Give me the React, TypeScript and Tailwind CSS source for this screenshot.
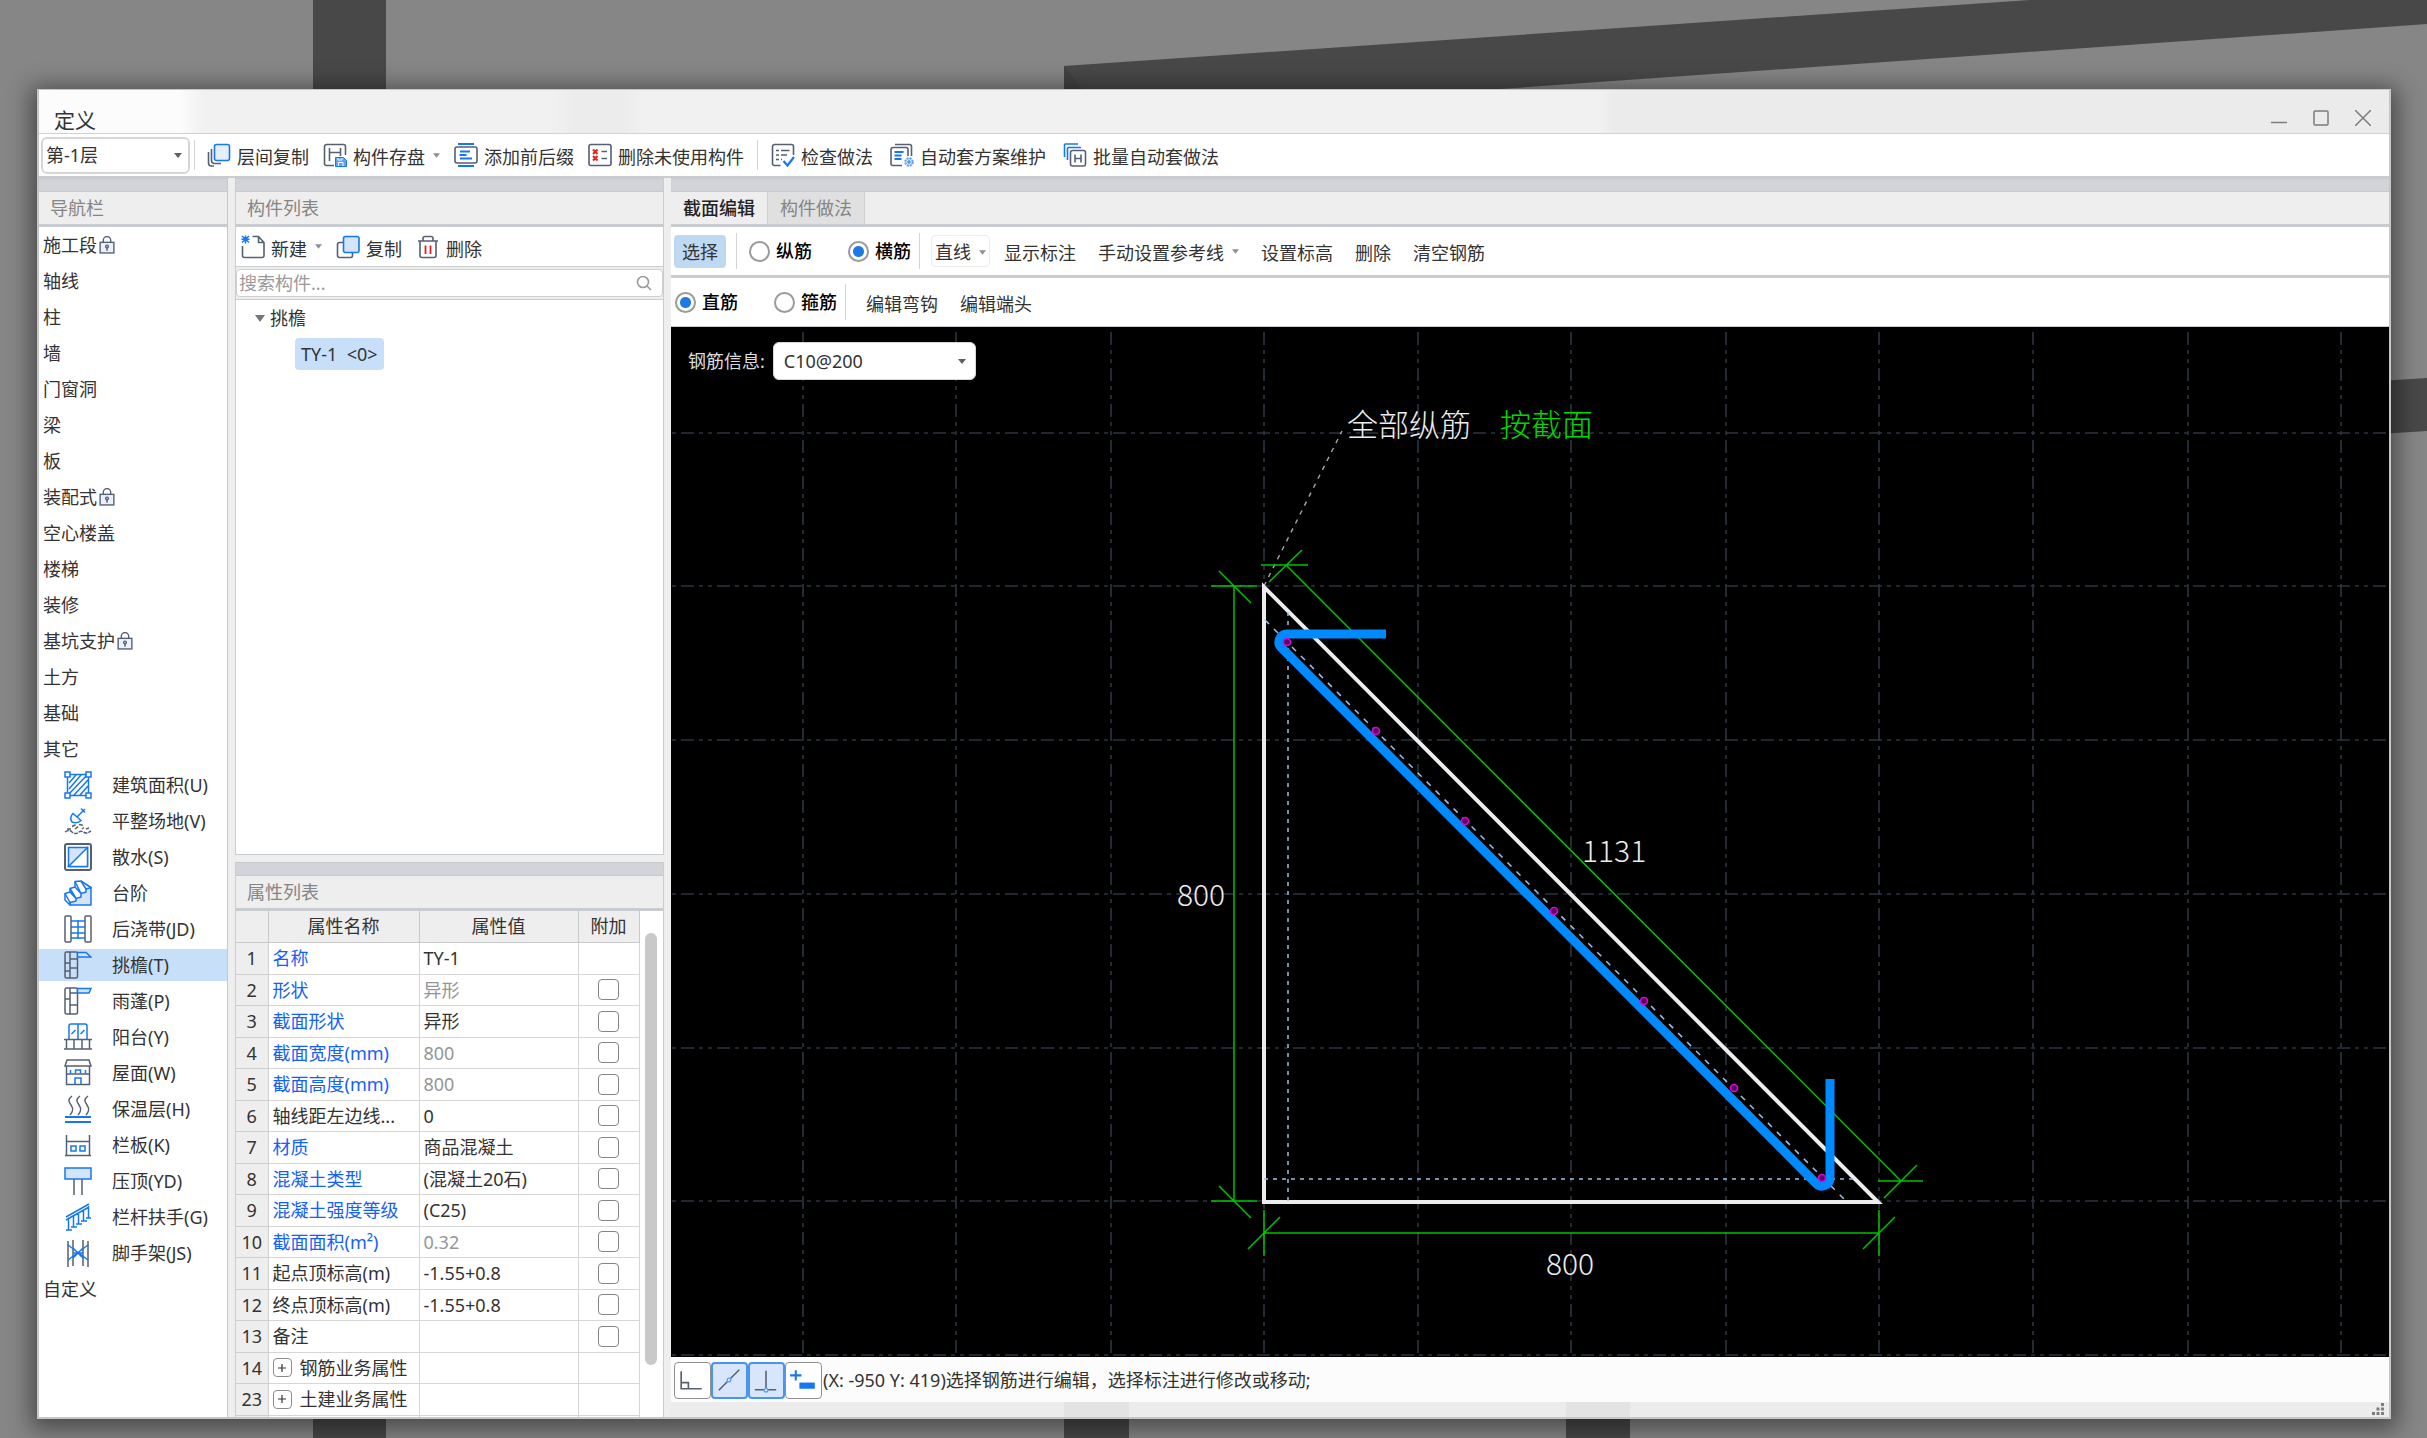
import React, { useState } from 'react';

// --- Types ---
interface NavEntry {
  label: string;
  locked?: boolean;
}

interface Property {
  no: number;
  name: string;
  value?: string;
  link?: boolean;
  muted?: boolean;
  checkable?: boolean;
  group?: boolean;
}

type IconProps = { className?: string };

// --- Data ---
const categories: NavEntry[] = [
  { label: '施工段', locked: true },
  { label: '轴线' },
  { label: '柱' },
  { label: '墙' },
  { label: '门窗洞' },
  { label: '梁' },
  { label: '板' },
  { label: '装配式', locked: true },
  { label: '空心楼盖' },
  { label: '楼梯' },
  { label: '装修' },
  { label: '基坑支护', locked: true },
  { label: '土方' },
  { label: '基础' },
  { label: '其它' },
];

const properties: Property[] = [
  { no: 1, name: '名称', value: 'TY-1', link: true },
  { no: 2, name: '形状', value: '异形', link: true, muted: true, checkable: true },
  { no: 3, name: '截面形状', value: '异形', link: true, checkable: true },
  { no: 4, name: '截面宽度(mm)', value: '800', link: true, muted: true, checkable: true },
  { no: 5, name: '截面高度(mm)', value: '800', link: true, muted: true, checkable: true },
  { no: 6, name: '轴线距左边线...', value: '0', checkable: true },
  { no: 7, name: '材质', value: '商品混凝土', link: true, checkable: true },
  { no: 8, name: '混凝土类型', value: '(混凝土20石)', link: true, checkable: true },
  { no: 9, name: '混凝土强度等级', value: '(C25)', link: true, checkable: true },
  { no: 10, name: '截面面积(m²)', value: '0.32', link: true, muted: true, checkable: true },
  { no: 11, name: '起点顶标高(m)', value: '-1.55+0.8', checkable: true },
  { no: 12, name: '终点顶标高(m)', value: '-1.55+0.8', checkable: true },
  { no: 13, name: '备注', checkable: true },
  { no: 14, name: '钢筋业务属性', group: true },
  { no: 23, name: '土建业务属性', group: true },
];

const gridX = [132, 285, 440, 593, 747, 900, 1055, 1208, 1362, 1517, 1670];
const gridY = [106, 259, 413, 567, 721, 874, 1028];
const bars = [[616, 315], [705, 404], [794, 494], [883, 584], [973, 674], [1063, 761], [1151, 851]];

// --- SVG Icons ---
const INK = '#566073';
const BLUE = '#1677f2';
const PALE = '#d3e4fb';

const Icon: React.FC<{ className?: string; children: React.ReactNode }> = ({ className = 'size-6', children }) => (
  <svg className={`${className} shrink-0`} viewBox="0 0 24 24" fill="none" stroke={INK} strokeWidth={1.6} aria-hidden="true">
    {children}
  </svg>
);

const NavIcon: React.FC<{ children: React.ReactNode }> = ({ children }) => (
  <svg className="size-7 shrink-0" viewBox="0 0 28 28" fill="none" stroke={INK} strokeWidth={1.5} aria-hidden="true">
    {children}
  </svg>
);

const Caret: React.FC<IconProps> = ({ className = 'w-2 fill-[#5b616b]' }) => (
  <svg className={`${className} h-[5px] shrink-0`} viewBox="0 0 8 5" aria-hidden="true">
    <path d="M0 0h8L4 5z" />
  </svg>
);

const LayerCopyIcon = () => (
  <Icon>
    <path d="M1.500 9v11a3 3 0 0 0 3 3H7M4.500 6v11.500a3 3 0 0 0 3 3H14" />
    <rect x="7.500" y="1.500" width="15" height="16" rx="2" fill="#e6effd" stroke={BLUE} />
  </Icon>
);

const ArchiveIcon = () => (
  <Icon>
    <path d="M11 22.500H3.500a2 2 0 0 1-2-2v-17a2 2 0 0 1 2-2h17a2 2 0 0 1 2 2V12" />
    <path d="M6.500 5v13M6.500 9.500h11M17.500 5v8" />
    <path d="M12.500 14.500h8l3 3v6h-11z" fill="#5ea2f8" stroke={BLUE} strokeWidth={1} />
    <path d="M15.500 23v-3.500h4.500V23M15 15v2h4v-2" stroke="#fff" strokeWidth={1} />
  </Icon>
);

const AffixIcon = () => (
  <Icon>
    <rect x="1" y="4" width="22" height="16" rx="2" />
    <path d="M4 1h16M4 23h16M6 8.500h10M5.500 12h7M6 15.500h12" stroke={BLUE} strokeWidth={1.800} />
  </Icon>
);

const RemoveUnusedIcon = () => (
  <Icon>
    <rect x="1" y="1.500" width="22" height="21" rx="2" />
    <path d="M13.500 8.500H19M13.500 15.500H19" />
    <path d="M5 6.500l4.500 4.500M9.500 6.500L5 11M5 13l4.500 4.500M9.500 13L5 17.500" stroke="#e02222" strokeWidth={2} />
  </Icon>
);

const CheckMethodIcon = () => (
  <Icon>
    <path d="M9.500 22.500H3.500a2 2 0 0 1-2-2v-17a2 2 0 0 1 2-2h17a2 2 0 0 1 2 2V12" />
    <path d="M5 7.500h3M10 7.500h8.500M5 12h3M10 12h6M5 16.500h3M10 16.500h1" />
    <path d="M12.500 18l4 4.500L23 14" stroke={BLUE} strokeWidth={2.200} />
  </Icon>
);

const SchemeIcon = () => (
  <Icon>
    <path d="M12 22.500H3a2 2 0 0 1-2-2v-14a2 2 0 0 1 2-2h13a2 2 0 0 1 2 2V13" />
    <path d="M5 1.500h14.500a2 2 0 0 1 2 2V13" />
    <path d="M4.500 9h9M4.500 12.500h7M4.500 16h7" stroke={BLUE} strokeWidth={1.800} />
    <circle cx="19" cy="19" r="3.800" fill={PALE} stroke="#5ea2f8" strokeWidth={2} strokeDasharray="2 1" />
    <circle cx="19" cy="19" r="1.200" stroke={BLUE} strokeWidth={1} />
  </Icon>
);

const BatchIcon = () => (
  <Icon>
    <path d="M1.500 14V2a1 1 0 0 1 1-1H15M4.500 17V5.500a1 1 0 0 1 1-1H18" stroke={BLUE} />
    <rect x="7.500" y="7.500" width="15" height="15.500" rx="2" />
    <path d="M12 11.500v8M18 11.500v8M12 15.500h6" />
  </Icon>
);

const NewIcon = () => (
  <Icon>
    <path d="M11.500 1.500h6l5.500 6v13a2 2 0 0 1-2 2H3.500a2 2 0 0 1-2-2V11M17.500 1.500v6H23" />
    <path d="M1 1l7 6.500M8 1L1 7.500M4.500 .5v8M.5 4.200h8" stroke={BLUE} strokeWidth={1.500} />
  </Icon>
);

const CopyIcon = () => (
  <Icon>
    <path d="M7 7.500H3.500a2 2 0 0 0-2 2v11a2 2 0 0 0 2 2h11a2 2 0 0 0 2-2V18" />
    <rect x="7.500" y="1.500" width="15.500" height="16" rx="2" fill={PALE} stroke={BLUE} />
  </Icon>
);

const TrashIcon = () => (
  <Icon>
    <path d="M2 6h20M4 6v14.500a2 2 0 0 0 2 2h12a2 2 0 0 0 2-2V6M7 6V3.500a2 2 0 0 1 2-2h6a2 2 0 0 1 2 2V6" />
    <path d="M9.500 10.500v8.500M14.500 10.500v8.500" stroke="#e02222" strokeWidth={1.800} />
  </Icon>
);

const SearchIcon = () => (
  <svg className="size-4 shrink-0" viewBox="0 0 16 16" fill="none" stroke="#9a9a9a" strokeWidth={1.6} aria-hidden="true">
    <circle cx="7" cy="7" r="5.500" />
    <path d="M11 11l4 4" />
  </svg>
);

const LockIcon = () => (
  <svg className="ml-0.5 h-[18px] w-4 shrink-0" viewBox="0 0 15 17" fill="none" stroke={INK} strokeWidth={1.3} aria-hidden="true">
    <rect x="1" y="6" width="13" height="10" fill="#eaf1fd" />
    <path d="M4 6V4a3.500 3.500 0 0 1 7 0v2M7.500 11v3" />
    <circle cx="7.500" cy="10" r="1.300" />
  </svg>
);

const AreaIcon = () => (
  <NavIcon>
    <g stroke={BLUE}>
      <path d="M3.500 3.500h21v21h-21zM5 12l7-8M5 18L17 4M5 23L23 4M10 24l14-15M16 24l8-9" />
      <path d="M1 1h5v5H1zM22 1h5v5h-5zM1 22h5v5H1zM22 22h5v5h-5z" fill="#fff" />
    </g>
  </NavIcon>
);

const LevelingIcon = () => (
  <NavIcon>
    <path d="M21 2l-8 8M17 1.500l4 4M9 6.500l8 7c-2 2-6 2.500-9 1.500-2-3-1.500-6 1-8.500z" stroke={BLUE} />
    <path d="M1 25c3-2 5-2 7 0 2 2 5 2 7 0 3-2 5 1 7 1s3-1 5-2M3 22h4M8 19.500l4-2M11 22l4-3M15 17.500l5 1M18 22l2-1.500M22 22l3-1" strokeDasharray="4 1" />
  </NavIcon>
);

const ApronIcon = () => (
  <NavIcon>
    <rect x="1" y="1" width="26" height="26" rx="2" strokeWidth={2} />
    <path d="M4.500 4.500h19v19h-19z" fill={PALE} stroke={BLUE} />
    <path d="M23.500 4.500v19h-19z" fill="#fff" stroke={BLUE} />
  </NavIcon>
);

const StepsIcon = () => (
  <NavIcon>
    <g stroke={BLUE} strokeLinejoin="round">
      <path d="M6 26v-4.500l5-1.500v-3.500l6-2V11l5-1.500 5-1V26z" fill={PALE} />
      <path d="M1 14.500L6 13V9.500L11 8V2.500L17 2l10 6.500-5 1.500v3l-5 1.500V18l-5 1.500V22l-6 1.500V26l-5-5z" fill="#fff" />
      <path d="M1 14.500l5 9M6 13l6 6.500M6 9.500l6 10M11 8l6 6.500M11 2.500l6 12M17 2l5 8" />
    </g>
  </NavIcon>
);

const PostCastIcon = () => (
  <NavIcon>
    <path d="M7 6h14M7 12h14M7 18h14M7 23h14M14 5v19" stroke={BLUE} />
    <rect x="1" y="1" width="6" height="26" rx="1" fill="#fff" />
    <rect x="21" y="1" width="6" height="26" rx="1" fill="#fff" />
  </NavIcon>
);

const EavesIcon = () => (
  <NavIcon>
    <rect x="1" y="1" width="12.500" height="26" rx="1.500" />
    <path d="M6 1v26M1 12h5M1 20h5M6 8h7M6 17h7" />
    <path d="M13.500 1.500H22l5 4.500H13.500z" fill={PALE} stroke={BLUE} />
  </NavIcon>
);

const CanopyIcon = () => (
  <NavIcon>
    <rect x="1" y="1" width="12.500" height="26" rx="1.500" />
    <path d="M6 1v26M1 12h5M6 6h7M6 18h7" />
    <path d="M13.500 1.500H27L25 6H13.500z" fill={PALE} stroke={BLUE} />
  </NavIcon>
);

const BalconyIcon = () => (
  <NavIcon>
    <path d="M5 16V3a2 2 0 0 1 2-2h14a2 2 0 0 1 2 2v13M14 1v15M7.500 11l4-4M16.500 11l4-4" stroke={BLUE} />
    <path d="M0 16.500h28M2.500 16.500V26M10 16.500V26M18 16.500V26M25.500 16.500V26M0 26h28" />
  </NavIcon>
);

const RoofIcon = () => (
  <NavIcon>
    <path d="M3 1h22l2 6H1zM2.500 7v18.500h23V7M2.500 15h23" />
    <path d="M6.500 14.500v-3.500M21.500 14.500v-3.500M11.500 14.500V11h5v3.500M11 25v-6h6v6" stroke={BLUE} />
  </NavIcon>
);

const InsulationIcon = () => (
  <NavIcon>
    <path d="M8 1c-4 3-4 5-1 9s1 8-1 10M16 1c-4 3-4 5-1 9s1 8-1 10M24 1c-4 3-4 5-1 9s1 8-1 10" />
    <path d="M1 22h26M1 27h26" stroke={BLUE} strokeWidth={1.800} />
  </NavIcon>
);

const RailBoardIcon = () => (
  <NavIcon>
    <path d="M2.500 4v20M25.500 4v20M1 24.500h26M2.500 10.500h23" />
    <path d="M7 15h5v5H7zM16 15h5v5h-5z" stroke={BLUE} />
  </NavIcon>
);

const CopingIcon = () => (
  <NavIcon>
    <path d="M10 12v16M18 12v16" />
    <rect x="1" y="1" width="26" height="11" fill={PALE} stroke={BLUE} />
  </NavIcon>
);

const HandrailIcon = () => (
  <NavIcon>
    <path d="M2 14L25 1M2 17L25 4M4.500 15v12M9.500 12v12M14.500 9.500V21M19.500 6.500V18M24.500 3v12M2 27h6M7 24h6M12 21h6M17 18h6M22 15h5" stroke={BLUE} />
  </NavIcon>
);

const ScaffoldIcon = () => (
  <NavIcon>
    <path d="M4 2v26M9 1v26M19 1v26M24 2v26" />
    <path d="M4 6l20 15M24 6L4 21M9 14h10M9 9l10 10M19 9L9 19" stroke={BLUE} />
  </NavIcon>
);

const others: { label: string; icon: React.FC }[] = [
  { label: '建筑面积(U)', icon: AreaIcon },
  { label: '平整场地(V)', icon: LevelingIcon },
  { label: '散水(S)', icon: ApronIcon },
  { label: '台阶', icon: StepsIcon },
  { label: '后浇带(JD)', icon: PostCastIcon },
  { label: '挑檐(T)', icon: EavesIcon },
  { label: '雨蓬(P)', icon: CanopyIcon },
  { label: '阳台(Y)', icon: BalconyIcon },
  { label: '屋面(W)', icon: RoofIcon },
  { label: '保温层(H)', icon: InsulationIcon },
  { label: '栏板(K)', icon: RailBoardIcon },
  { label: '压顶(YD)', icon: CopingIcon },
  { label: '栏杆扶手(G)', icon: HandrailIcon },
  { label: '脚手架(JS)', icon: ScaffoldIcon },
];

// --- Small UI pieces ---
const ToolButton: React.FC<{ icon?: React.ReactNode; label: string; caret?: boolean }> = ({ icon, label, caret }) => (
  <button type="button" className="flex items-center gap-1.5 whitespace-nowrap">
    {icon}
    <span className="pt-1">{label}</span>
    {caret && <Caret className="ml-0.5 w-[7px] fill-[#8c8f94]" />}
  </button>
);

const Divider = () => <div className="h-9 w-px shrink-0 bg-[#d4d4d4]" />;

const DockHeader: React.FC<{ title: string }> = ({ title }) => (
  <>
    <div className="h-[14px] shrink-0 border-y border-[#c6cacf] bg-[#d2d4da]" />
    <h2 className="flex h-[35px] shrink-0 items-center border-b-3 border-[#c8ccd0] bg-[#eeeeee] px-[11px] text-[#858585]">{title}</h2>
  </>
);

interface RadioProps {
  name: string;
  label: string;
  checked: boolean;
  onChange: () => void;
}
const Radio: React.FC<RadioProps> = ({ name, label, checked, onChange }) => (
  <label className="flex items-center gap-1.5 whitespace-nowrap font-medium text-black">
    <input
      type="radio"
      name={name}
      checked={checked}
      onChange={onChange}
      className="size-[21px] appearance-none rounded-full border-2 border-[#9a9a9a] bg-white checked:bg-[radial-gradient(circle,#1f7ae8_0_5px,#ffffff_6px)]"
    />
    {label}
  </label>
);

// --- Panels ---
const Backdrop = () => (
  <svg className="absolute inset-0 size-full" viewBox="0 0 2427 1438" preserveAspectRatio="none" aria-hidden="true">
    <g fill="#484848">
      <path d="M313 0h73v1438h-73zM1064 66L2030 0h397v24L1500 89v20h-436zM2300 386l127-8v53l-127 8zM1064 1300h65v138h-65zM1566 1300h64v138h-64z" />
    </g>
    <path d="M1064 66l24 30h-24z" fill="#424242" />
  </svg>
);

const TitleBar = () => (
  <header className="flex h-11 shrink-0 items-end justify-between border-b border-[#cfd1d3] bg-[linear-gradient(90deg,#fcfcfc_140px,#f1f1f1_165px,#f1f1f1_515px,#ececec_535px,#ececec_585px,#f1f1f1_605px,#f1f1f1_1560px,#ebebeb_1575px)] pr-[18px] pl-[15px] text-[#7c7c7c]">
    <h1 className="text-[21px] leading-[26px] text-[#333]">定义</h1>
    <div className="flex gap-[26px] pb-[7px]">
      <button type="button" aria-label="最小化">
        <svg className="size-4" viewBox="0 0 16 16" stroke="currentColor" strokeWidth={1.5}><path d="M0 12.500h16" /></svg>
      </button>
      <button type="button" aria-label="最大化">
        <svg className="size-4" viewBox="0 0 16 16" fill="none" stroke="currentColor" strokeWidth={1.5}><rect x="1" y="1" width="14" height="14" rx="1" /></svg>
      </button>
      <button type="button" aria-label="关闭">
        <svg className="size-4" viewBox="0 0 16 16" stroke="currentColor" strokeWidth={1.5}><path d="M0 0l16 16M16 0L0 16" /></svg>
      </button>
    </div>
  </header>
);

const MainToolbar = () => (
  <div className="flex h-11 shrink-0 items-center border-b-2 border-[#c9cdd2] bg-white pl-0.5">
    <div className="relative mr-1 flex items-center">
      <select aria-label="楼层" className="h-[37px] w-[149px] appearance-none rounded-md border-2 border-[#d6d6d6] bg-white pl-[3px]">
        <option>第-1层</option>
      </select>
      <Caret className="pointer-events-none absolute right-2 w-2 fill-[#5b616b]" />
    </div>
    <div className="h-[30px] w-px bg-[#d4d4d4]" />
    <div className="ml-3 flex gap-[14px]">
      <ToolButton icon={<LayerCopyIcon />} label="层间复制" />
      <ToolButton icon={<ArchiveIcon />} label="构件存盘" caret />
      <ToolButton icon={<AffixIcon />} label="添加前后缀" />
      <ToolButton icon={<RemoveUnusedIcon />} label="删除未使用构件" />
    </div>
    <div className="mx-[13px] h-[30px] w-px bg-[#d4d4d4]" />
    <div className="flex gap-[17px]">
      <ToolButton icon={<CheckMethodIcon />} label="检查做法" />
      <ToolButton icon={<SchemeIcon />} label="自动套方案维护" />
      <ToolButton icon={<BatchIcon />} label="批量自动套做法" />
    </div>
  </div>
);

const Navigator = () => {
  const [active, setActive] = useState('挑檐(T)');
  return (
    <nav className="flex w-[189px] shrink-0 flex-col overflow-hidden border-r border-[#c8c8c8] bg-white">
      <DockHeader title="导航栏" />
      <ul>
        {categories.map(item => (
          <li key={item.label}>
            <button type="button" className="flex h-9 w-full items-center pl-1">
              {item.label}
              {item.locked && <LockIcon />}
            </button>
          </li>
        ))}
        {others.map(({ label, icon: Glyph }) => (
          <li key={label} className="flex h-9 items-center">
            <button
              type="button"
              onClick={() => setActive(label)}
              className={`flex h-8 w-full items-center gap-5 pl-[25px] whitespace-nowrap ${active === label ? 'bg-[#c7dff9]' : ''}`}
            >
              <Glyph />
              {label}
            </button>
          </li>
        ))}
        <li>
          <button type="button" className="flex h-9 w-full items-center pl-1">自定义</button>
        </li>
      </ul>
    </nav>
  );
};

const ComponentList = () => (
  <section className="flex min-h-0 flex-col border border-t-0 border-[#c9cdd0]">
    <DockHeader title="构件列表" />
    <div className="flex h-10 shrink-0 items-center gap-[14px] border-b border-[#c9cdd0] bg-white px-[5px]">
      <ToolButton icon={<NewIcon />} label="新建" caret />
      <ToolButton icon={<CopyIcon />} label="复制" />
      <ToolButton icon={<TrashIcon />} label="删除" />
    </div>
    <div className="my-0.5 flex h-7 shrink-0 items-center rounded border border-[#cfcfcf] bg-white pr-2.5 pl-0.5">
      <input type="text" aria-label="搜索构件" placeholder="搜索构件..." className="min-w-0 flex-1 outline-none placeholder:text-[#9a9a9a]" />
      <SearchIcon />
    </div>
    <div className="flex-1 border-t border-[#cfcfcf] bg-white">
      <div className="flex h-9 items-center gap-1 pl-[18px]">
        <svg className="h-[7px] w-3" viewBox="0 0 12 7" fill="#767676" aria-hidden="true"><path d="M1 0h10L6 7z" /></svg>
        挑檐
      </div>
      <div className="flex h-9 items-center pl-[59px]">
        <button type="button" className="h-8 rounded bg-[#c7dff9] px-1.5 whitespace-pre">{'TY-1  <0>'}</button>
      </div>
    </div>
  </section>
);

const PropertyTable = () => (
  <section className="flex min-h-0 flex-col border-x border-[#c9cdd0]">
    <DockHeader title="属性列表" />
    <div className="flex min-h-0 flex-1 overflow-hidden bg-white">
      <table className="w-[403px] shrink-0 table-fixed border-collapse self-start">
        <colgroup>
          <col className="w-8" />
          <col className="w-[151px]" />
          <col className="w-[159px]" />
          <col className="w-[61px]" />
        </colgroup>
        <thead>
          <tr className="h-[31px] bg-[#eeeeee]">
            <th className="border-r border-b border-[#c9c9c9]" />
            <th className="border-r border-b border-[#c9c9c9] font-normal">属性名称</th>
            <th className="border-r border-b border-[#c9c9c9] font-normal">属性值</th>
            <th className="border-r border-b border-[#c9c9c9] font-normal">附加</th>
          </tr>
        </thead>
        <tbody>
          {properties.map(p => (
            <tr key={p.no} className="odd:h-8 even:h-[31px]">
              <td className="border-r border-b border-[#cfcfcf] bg-[#eeeeee] p-0 text-center">{p.no}</td>
              <td className={`border-r border-b border-[#d6d6d6] p-0 pl-1 whitespace-nowrap ${p.link ? 'text-[#1460fa]' : ''}`}>
                {p.group ? (
                  <div className="flex items-center gap-2">
                    <button type="button" aria-label="展开" className="flex size-[19px] items-center justify-center rounded border border-[#8c8c8c]">
                      <svg className="size-2" viewBox="0 0 8 8" stroke="#333" strokeWidth={1.2}><path d="M4 0v8M0 4h8" /></svg>
                    </button>
                    {p.name}
                  </div>
                ) : (
                  p.name
                )}
              </td>
              <td className={`border-r border-b border-[#d6d6d6] p-0 pl-1 ${p.muted ? 'text-[#959595]' : ''}`}>{p.value}</td>
              <td className="border-r border-b border-[#d6d6d6] p-0">
                {p.checkable && (
                  <input type="checkbox" aria-label={`${p.name} 附加`} className="mx-auto block size-[21px] appearance-none rounded border border-[#858585] checked:bg-[#1f7ae8]" />
                )}
              </td>
            </tr>
          ))}
          <tr className="h-8">
            <td className="border-r border-[#cfcfcf] bg-[#eeeeee]" />
            <td className="border-r border-[#d6d6d6]" />
            <td className="border-r border-[#d6d6d6]" />
            <td className="border-r border-[#d6d6d6]" />
          </tr>
        </tbody>
      </table>
      <div className="flex flex-1 justify-center pt-[22px] pb-[52px]">
        <div className="w-3 rounded-full bg-[#c9c9c9]" />
      </div>
    </div>
  </section>
);

const EditorToolbars = () => {
  const [direction, setDirection] = useState('横筋');
  const [kind, setKind] = useState('直筋');
  return (
    <>
      <div className="flex h-[51px] shrink-0 items-center border-b-3 border-[#c8ccd0] bg-white pl-[3px]">
        <button type="button" className="mr-2.5 h-[33px] rounded bg-[#c0d9f3] px-2 pt-0.5">选择</button>
        <Divider />
        <div className="mr-2 ml-3 flex gap-9">
          <Radio name="direction" label="纵筋" checked={direction === '纵筋'} onChange={() => setDirection('纵筋')} />
          <Radio name="direction" label="横筋" checked={direction === '横筋'} onChange={() => setDirection('横筋')} />
        </div>
        <Divider />
        <div className="ml-[11px] flex items-center gap-[14px]">
          <button type="button" className="flex h-8 items-center gap-2 rounded border border-[#ececec] px-[3px] pt-0.5">
            直线
            <Caret className="w-[7px] fill-[#8c8f94]" />
          </button>
          <div className="flex items-center gap-[22px]">
            <ToolButton label="显示标注" />
            <ToolButton label="手动设置参考线" caret />
            <ToolButton label="设置标高" />
            <ToolButton label="删除" />
            <ToolButton label="清空钢筋" />
          </div>
        </div>
      </div>
      <div className="flex h-[49px] shrink-0 items-center border-b border-[#c8ccd0] bg-white pl-1">
        <div className="mr-2 flex gap-9">
          <Radio name="kind" label="直筋" checked={kind === '直筋'} onChange={() => setKind('直筋')} />
          <Radio name="kind" label="箍筋" checked={kind === '箍筋'} onChange={() => setKind('箍筋')} />
        </div>
        <Divider />
        <div className="ml-5 flex gap-[22px]">
          <ToolButton label="编辑弯钩" />
          <ToolButton label="编辑端头" />
        </div>
      </div>
    </>
  );
};

const SectionCanvas = () => (
  <div className="relative min-h-0 flex-1 bg-black">
    <svg className="absolute inset-0 size-full" viewBox="0 0 1718 1030" preserveAspectRatio="xMidYMid slice" fill="none">
      {/* grid */}
      <g stroke="#2c3540" strokeWidth={1.6} strokeDasharray="13 5 4 5 4 5">
        {gridX.map(x => <path key={x} d={`M${x} 5V1030`} />)}
        {gridY.map(y => <path key={y} d={`M-26 ${y}H1718`} />)}
      </g>

      {/* leader */}
      <path d="M593 259L671 104" stroke="#a8a8a8" strokeWidth={1.4} strokeDasharray="4.500 5.500" />

      {/* dimensions */}
      <g stroke="#00c400" strokeWidth={1.5}>
        <path d="M563 259V874M540 259h46M540 874h46M548 244l32 32M548 859l32 32" />
        <path d="M593 906H1208M593 883v46M1208 883v46M577 922l32-32M1192 922l32-32" />
        <path d="M616 239L1230 854M590 238h47M1207 854h45M598 255l33-32M1213 871l33-33" />
      </g>

      {/* concrete outline */}
      <path d="M593 260V875H1207z" stroke="#ededed" strokeWidth={4} />

      {/* cover lines */}
      <g stroke="#9fbfe6" strokeWidth={1.5}>
        <path d="M617 285V874M593 852H1185" strokeDasharray="4 5" />
        <path d="M594 293L1176 875" strokeDasharray="5.700 7" />
      </g>

      {/* bar with hooks */}
      <path d="M715 307H616A8 8 0 0 0 610.400 320.700L1145.400 856.700A8 8 0 0 0 1159 851V752" stroke="#008aff" strokeWidth={9} />

      <g fill="#5a005a" stroke="#e000e0" strokeWidth={1.600}>
        {bars.map(([x, y]) => <circle key={x} cx={x} cy={y} r={3.500} />)}
      </g>

      <g fill="#ececec" className="font-['Noto_Sans_CJK_SC',sans-serif] text-[30px] font-light">
        <text x="506" y="579">800</text>
        <text x="875" y="948">800</text>
        <text x="911" y="535">1131</text>
      </g>
      <g className="font-['Noto_Sans_CJK_SC',sans-serif] text-[31px] font-light">
        <text x="676" y="109" fill="#ececec">全部纵筋</text>
        <text x="829" y="109" fill="#00d800">按截面</text>
      </g>
    </svg>
    <div className="absolute top-[15px] left-[17px] flex items-center gap-2">
      <label htmlFor="rebar" className="text-[#dcdcdc]">钢筋信息:</label>
      <div className="relative flex items-center">
        <select id="rebar" className="h-[38px] w-[203px] appearance-none rounded-md border border-[#d6d6d6] bg-white pl-2.5">
          <option>C10@200</option>
        </select>
        <Caret className="pointer-events-none absolute right-2.5 w-2 fill-[#5b616b]" />
      </div>
    </div>
  </div>
);

const StatusBar = () => (
  <footer className="shrink-0">
    <div className="flex h-[45px] items-center bg-[#fcfcfc] pt-px pl-[3px]">
      <button type="button" aria-label="正交" className="size-[37px] rounded border border-[#909090] bg-white">
        <svg viewBox="0 0 34 34" fill="none" stroke={INK} strokeWidth={1.600}><path d="M6 8v17h20M6 19h7v6" /></svg>
      </button>
      <button type="button" aria-label="中点" className="size-[37px] rounded border-2 border-[#4b94ee] bg-[#d7e6fb]">
        <svg viewBox="0 0 34 34" fill="none" stroke={INK} strokeWidth={1.600}><path d="M6 27L27 6" /><circle cx="16.500" cy="16.500" r="1.800" fill="#fff" stroke="#5ea2f8" /></svg>
      </button>
      <button type="button" aria-label="垂点" className="size-[37px] rounded border-2 border-[#4b94ee] bg-[#d7e6fb]">
        <svg viewBox="0 0 34 34" fill="none" stroke={INK} strokeWidth={1.600}><path d="M16.500 7v19M5 26.500h22" /><circle cx="16.500" cy="27" r="1.800" fill="#fff" stroke="#5ea2f8" /></svg>
      </button>
      <button type="button" aria-label="动态输入" className="mr-px size-[37px] rounded border border-[#909090] bg-white">
        <svg viewBox="0 0 34 34" fill="none" stroke={BLUE} strokeWidth={2}><path d="M4 12h11M9.500 7v10" /><path d="M13 19h15v6H13z" fill={BLUE} stroke="none" /></svg>
      </button>
      <p className="whitespace-nowrap">(X: -950 Y: 419)选择钢筋进行编辑，选择标注进行修改或移动;</p>
    </div>
    <div className="flex h-[15px] items-start justify-end bg-[linear-gradient(90deg,#ececec_393px,#e3e3e3_393px,#e3e3e3_458px,#ececec_458px,#ececec_895px,#e3e3e3_895px,#e3e3e3_959px,#ececec_959px)] pr-1">
      <svg className="size-[14px]" viewBox="0 0 14 14" fill="#7d7d7d" aria-hidden="true">
        <path d="M10 1h3v3h-3zM5.500 5.500h3v3h-3zM10 5.500h3v3h-3zM1 10h3v3H1zM5.500 10h3v3h-3zM10 10h3v3h-3z" />
      </svg>
    </div>
  </footer>
);

// --- Main App Component ---
export default function App() {
  return (
    <div className="relative flex h-screen bg-[#868686] pt-[89px] pr-9 pb-[19px] pl-[37px] font-['Noto_Sans','Noto_Sans_CJK_SC',sans-serif] text-lg leading-6 text-[#333]">
      <Backdrop />
      <main className="relative flex min-w-0 flex-1 flex-col border-x-2 border-t border-b-2 border-[#c4c6c8] bg-[#eeeeee] shadow-[0_4px_22px_6px_rgba(0,0,0,0.45)]">
        <TitleBar />
        <MainToolbar />
        <div className="flex min-h-0 flex-1 gap-[7px]">
          <Navigator />
          <div className="grid w-[429px] shrink-0 grid-rows-[677fr_555fr] gap-[7px]">
            <ComponentList />
            <PropertyTable />
          </div>
          <section className="flex min-w-0 flex-1 flex-col">
            <div className="h-[14px] shrink-0 border-y border-[#c6cacf] bg-[#d2d4da]" />
            <div className="flex h-[35px] shrink-0 border-b-3 border-[#c8ccd0]">
              <button type="button" className="border-r border-[#cfcfcf] px-3 font-medium text-[#222]">截面编辑</button>
              <button type="button" className="border-r border-[#cfcfcf] bg-[#e0e0e0] px-3 text-[#858585]">构件做法</button>
            </div>
            <EditorToolbars />
            <SectionCanvas />
            <StatusBar />
          </section>
        </div>
      </main>
    </div>
  );
}
